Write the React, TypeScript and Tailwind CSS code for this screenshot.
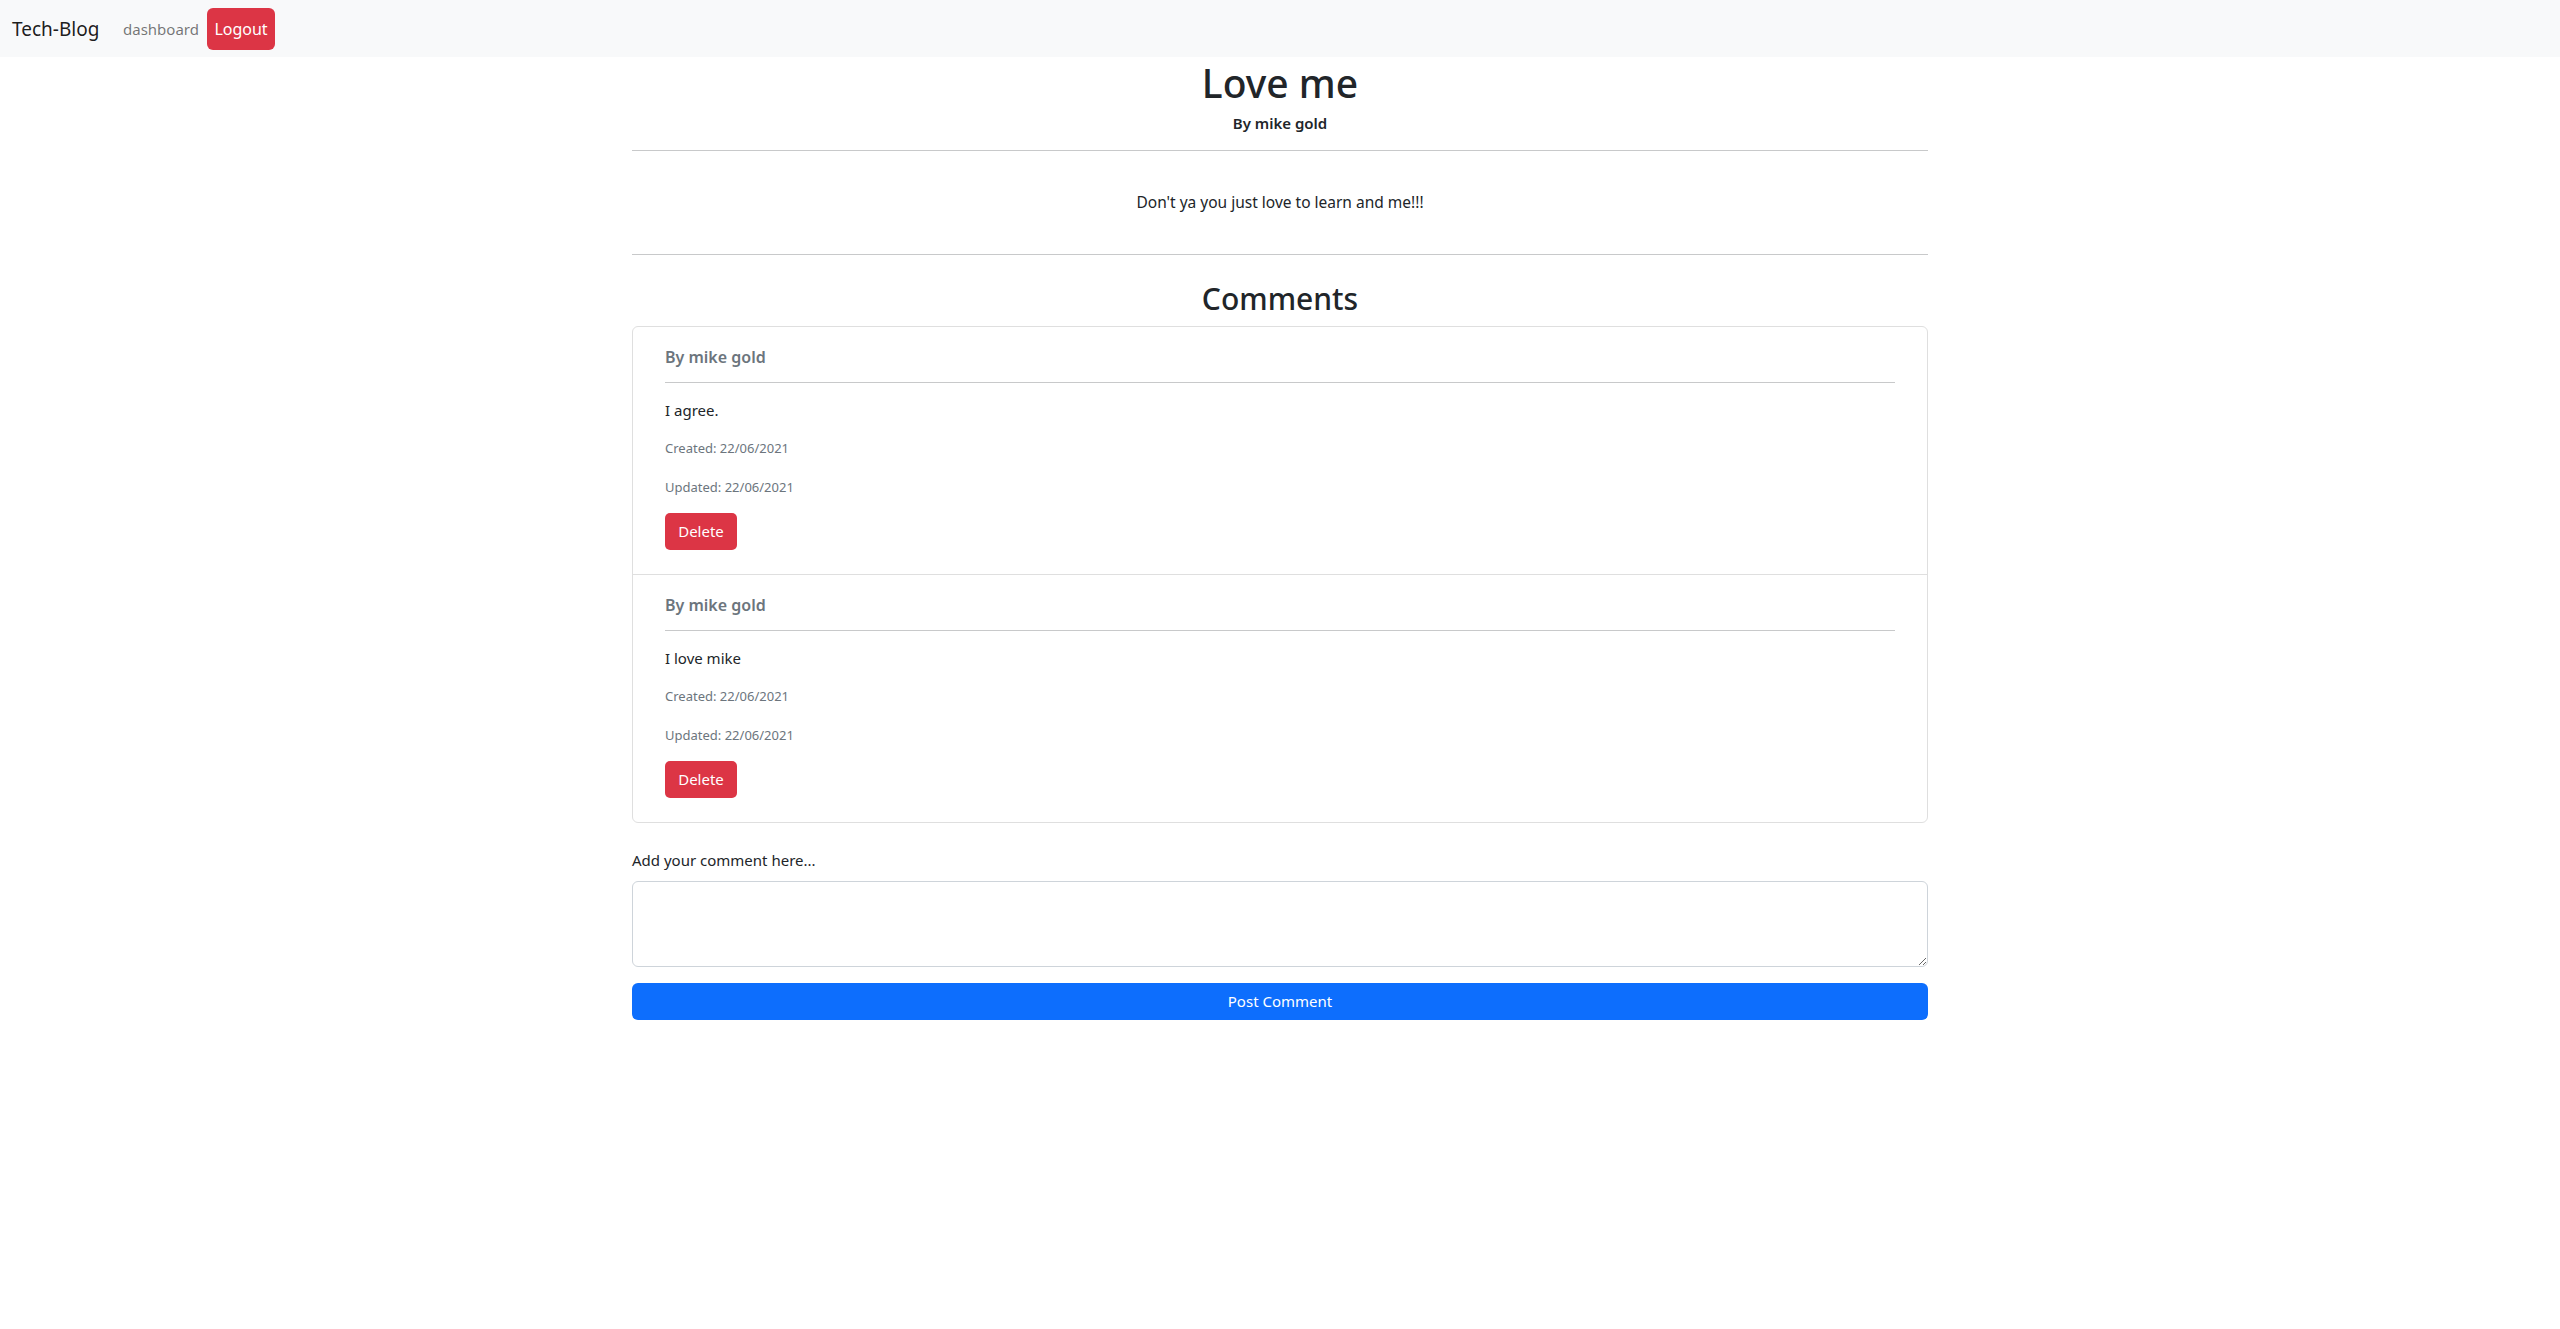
import React from "react";

const comments = [
  { author: "mike gold", body: "I agree.", created: "22/06/2021", updated: "22/06/2021" },
  { author: "mike gold", body: "I love mike", created: "22/06/2021", updated: "22/06/2021" },
];

export default function App() {
  return (
    <div className="min-h-screen bg-white text-[#212529]" style={{ fontFamily: '"Noto Sans", "Open Sans", sans-serif' }}>
      <nav className="flex h-[57px] items-center bg-[#f8f9fa] pl-3">
        <a className="w-[111px] text-[19px] leading-[30px] text-black/90">Tech-Blog</a>
        <a className="w-[84px] text-[15px] leading-[24px] text-black/55">dashboard</a>
        <button className="flex h-[42px] w-[68px] items-center justify-center rounded-[6px] bg-[#dc3545] text-[16px] text-white">
          Logout
        </button>
      </nav>

      <main className="mx-auto w-[1296px]">
        <h1 className="mt-[2px] text-center text-[39px] font-medium leading-[48px]">Love me</h1>
        <p className="mt-[5px] text-center text-[15px] font-semibold leading-[22px]">By mike gold</p>
        <div className="mt-[16px] h-px bg-[#c8c9ca]" />
        <p className="mt-[39px] text-center text-[15.5px] leading-[24px]">Don't ya you just love to learn and me!!!</p>
        <div className="mt-[40px] h-px bg-[#c8c9ca]" />
        <h3 className="mt-[26px] text-center text-[30px] font-medium leading-[36px]">Comments</h3>

        <div className="mt-[9px] rounded-[6px] border border-[#dfdfdf]">
          {comments.map((c, i) => (
            <div key={i} className={`px-8 pb-6 pt-[21px] ${i > 0 ? "border-t border-[#dfdfdf]" : ""}`}>
              <h6 className="text-[16px] font-semibold leading-[19px] text-[#6c757d]">By {c.author}</h6>
              <div className="mt-[15px] h-px bg-[#c8c9ca]" />
              <p className="mt-[16px] text-[15px] leading-[22px]">{c.body}</p>
              <p className="mt-[18px] text-[13px] leading-[19px] text-[#6c757d]">Created: {c.created}</p>
              <p className="mt-[20px] text-[13px] leading-[19px] text-[#6c757d]">Updated: {c.updated}</p>
              <button className="mt-[16px] flex h-[37px] w-[72px] items-center justify-center rounded-[5px] bg-[#dc3545] text-[15px] text-white">
                Delete
              </button>
            </div>
          ))}
        </div>

        <label className="mt-[26px] block text-[15px] leading-[22px]">Add your comment here...</label>
        <textarea className="mt-[10px] block h-[86px] w-full rounded-[6px] border border-[#ced4da] bg-white px-3 py-1.5 text-[16px] outline-none" />
        <button className="mt-[16px] flex h-[37px] w-full items-center justify-center rounded-[6px] bg-[#0d6efd] text-[15px] text-white">
          Post Comment
        </button>
      </main>
    </div>
  );
}
